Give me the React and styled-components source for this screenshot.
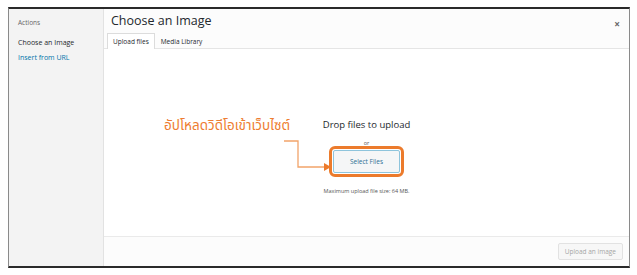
import styled, { createGlobalStyle } from "styled-components";

const Global = createGlobalStyle`
	html, body { margin:0; padding:0; background:#fff; }
	body { font-family:"Open Sans", "Noto Sans", sans-serif; }
`

const Frame = styled.div`
	margin:7px 0 0 8px;
	width:622px;
	height:261px;
	box-sizing:border-box;
	border-top:2px solid #2a2a2a;
	border-bottom:2px solid #2a2a2a;
	border-left:1px solid #8a8a8a;
	border-right:1px solid #8a8a8a;
	display:grid;
	grid-template-columns:95px 1fr;
`

const Sidebar = styled.div`
	background:#f3f3f3;
	border-right:1px solid #e2e2e2;
	padding:8px 0 0 9px;
	display:flex;
	flex-direction:column;
`

const SideItem = styled.div`
	font-size:${p => p.$small ? "6.5px" : "7px"};
	color:${p => p.$color};
	height:${p => p.$h}px;
	line-height:12px;
`

const Main = styled.div`
	display:flex;
	flex-direction:column;
	min-width:0;
`

const Header = styled.div`
	background:#fcfcfc;
	border-bottom:1px solid #e5e5e5;
	height:40px;
	box-sizing:border-box;
	padding:3px 0 0 7px;
	display:flex;
	flex-direction:column;
	position:relative;
`

const Title = styled.h1`
	margin:0;
	font-weight:400;
	font-size:12.5px;
	color:#23282d;
	line-height:18px;
`

const Close = styled.span`
	position:absolute;
	right:9px;
	top:8px;
	font-size:10px;
	font-weight:700;
	color:#666;
`

const Tabs = styled.div`
	display:flex;
	margin:3px 0 -1px -4px;
`

const Tab = styled.div`
	font-size:6.5px;
	color:#23282d;
	padding:0 5px;
	height:16px;
	line-height:16px;
	box-sizing:border-box;
	border:1px solid ${p => p.$active ? "#dcdcdc" : "transparent"};
	border-bottom:none;
	background:${p => p.$active ? "#fff" : "transparent"};
`

const Body = styled.div`
	flex:1;
	background:#fff;
	display:flex;
	flex-direction:column;
	align-items:center;
	padding-top:69px;
	box-sizing:border-box;
	position:relative;
`

const Drop = styled.div`
	font-size:9.5px;
	color:#23282d;
	line-height:14px;
`

const Or = styled.div`
	font-size:5.5px;
	color:#555;
	margin-top:7px;
	line-height:8px;
`

const Ring = styled.div`
	border:3px solid #ec7b2c;
	border-radius:6px;
	padding:1px;
	margin-top:-1px;
`

const SelectBtn = styled.button`
	width:67px;
	height:23px;
	background:#f5f6f7;
	border:1px solid #8ec4dc;
	border-radius:2px;
	font-family:inherit;
	font-size:6.5px;
	color:#2e6f94;
	padding:0;
	display:block;
`

const MaxSize = styled.div`
	font-size:5.5px;
	color:#555;
	margin-top:10px;
`

const Note = styled.div`
	position:absolute;
	left:60px;
	top:67px;
	font-family:"Noto Sans Thai", "Noto Sans", "DejaVu Sans", sans-serif;
	font-size:13.5px;
	color:#ee7d31;
	white-space:nowrap;
`

const Arrow = styled.svg`
	position:absolute;
	left:180px;
	top:91px;
`

const Footer = styled.div`
	height:30px;
	box-sizing:border-box;
	background:#fcfcfc;
	border-top:1px solid #eaeaea;
	display:flex;
	justify-content:flex-end;
	align-items:center;
	padding-right:6px;
`

const UploadBtn = styled.button`
	height:17px;
	padding:0 6px;
	background:#f7f7f7;
	border:1px solid #e2e2e2;
	border-radius:2px;
	font-family:inherit;
	font-size:6.5px;
	color:#a5a5a5;
`

export default function App(){
	return(
		<>
			<Global />
			<Frame>
				<Sidebar>
					<SideItem $small $color="#666" $h={20}>Actions</SideItem>
					<SideItem $color="#23282d" $h={15}>Choose an Image</SideItem>
					<SideItem $color="#0073aa" $h={15}>Insert from URL</SideItem>
				</Sidebar>
				<Main>
					<Header>
						<Title>Choose an Image</Title>
						<Close>×</Close>
						<Tabs>
							<Tab $active>Upload files</Tab>
							<Tab>Media Library</Tab>
						</Tabs>
					</Header>
					<Body>
						<Drop>Drop files to upload</Drop>
						<Or>or</Or>
						<Ring>
							<SelectBtn>Select Files</SelectBtn>
						</Ring>
						<MaxSize>Maximum upload file size: 64 MB.</MaxSize>
						<Note>อัปโหลดวิดีโอเข้าเว็บไซต์</Note>
						<Arrow width="50" height="32" viewBox="0 0 50 32">
							<path d="M0 1 H14 V27 H41" fill="none" stroke="#f2a46a" strokeWidth="1.3" />
							<path d="M40 23 L47 27 L40 31 Z" fill="#ec7b2c" />
						</Arrow>
					</Body>
					<Footer>
						<UploadBtn>Upload an image</UploadBtn>
					</Footer>
				</Main>
			</Frame>
		</>
	)
}
